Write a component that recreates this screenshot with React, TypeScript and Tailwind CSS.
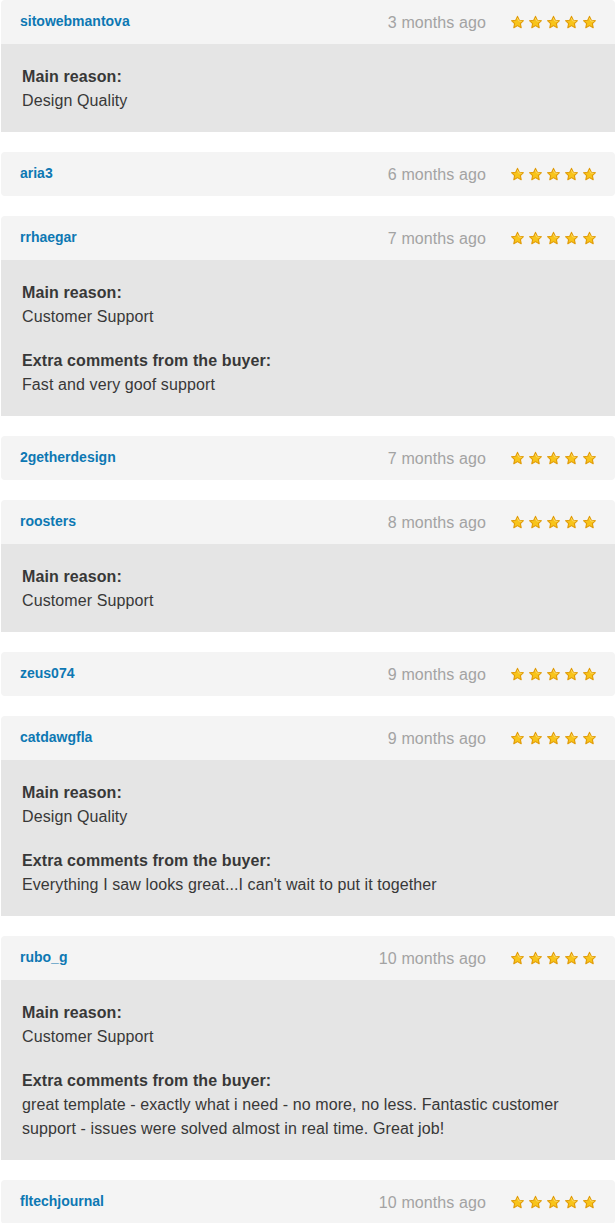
import React from "react";

interface Review {
  user: string;
  date: string;
  reason?: string;
  comment?: string;
}

const reviews: Review[] = [
  { user: "sitowebmantova", date: "3 months ago", reason: "Design Quality" },
  { user: "aria3", date: "6 months ago" },
  {
    user: "rrhaegar",
    date: "7 months ago",
    reason: "Customer Support",
    comment: "Fast and very goof support",
  },
  { user: "2getherdesign", date: "7 months ago" },
  { user: "roosters", date: "8 months ago", reason: "Customer Support" },
  { user: "zeus074", date: "9 months ago" },
  {
    user: "catdawgfla",
    date: "9 months ago",
    reason: "Design Quality",
    comment: "Everything I saw looks great...I can't wait to put it together",
  },
  {
    user: "rubo_g",
    date: "10 months ago",
    reason: "Customer Support",
    comment:
      "great template - exactly what i need - no more, no less. Fantastic customer support - issues were solved almost in real time. Great job!",
  },
  { user: "fltechjournal", date: "10 months ago" },
];

const Star = () => (
  <svg width="15" height="15" viewBox="0 0 24 24" className="block">
    <path
      d="M12 2.2l2.9 6.1 6.6.8-4.9 4.6 1.3 6.6L12 17l-5.9 3.3 1.3-6.6-4.9-4.6 6.6-.8z"
      fill="#f8c41a"
      stroke="#e19b08"
      strokeWidth="1.8"
      strokeLinejoin="round"
    />
    <path d="M12 5.5l1.9 4 4.3.5" fill="none" stroke="#fde27a" strokeWidth="1.2" strokeLinecap="round" />
  </svg>
);

const Stars = () => (
  <div className="flex items-center gap-[3px]">
    {Array.from({ length: 5 }).map((_, i) => (
      <Star key={i} />
    ))}
  </div>
);

const ReviewCard = ({ review }: { review: Review }) => {
  const hasBody = !!review.reason;
  return (
    <div className="w-full">
      <div
        className={`flex items-center justify-between h-[44px] pl-[19px] pr-[18px] bg-[#f4f4f4] ${
          hasBody ? "rounded-t-[4px]" : "rounded-[4px]"
        }`}
      >
        <a className="text-[14px] font-bold text-[#0d78b3] -mt-[2px]">{review.user}</a>
        <div className="flex items-center gap-[24px]">
          <span className="text-[16px] text-[#a3a3a3] translate-y-[1px] tracking-[0.1px]">{review.date}</span>
          <Stars />
        </div>
      </div>
      {hasBody && (
        <div className="bg-[#e5e5e5] pl-[21px] pr-5 pt-[21px] pb-[19px] text-[16px] leading-[24px] text-[#383838] tracking-[0.1px]">
          <p className="font-bold">Main reason:</p>
          <p>{review.reason}</p>
          {review.comment && (
            <>
              <p className="font-bold mt-5">Extra comments from the buyer:</p>
              <p>{review.comment}</p>
            </>
          )}
        </div>
      )}
    </div>
  );
};

export default function App() {
  return (
    <div
      className="w-[616px] bg-white px-[1px] flex flex-col gap-5"
      style={{ fontFamily: '"Liberation Sans", Arial, sans-serif' }}
    >
      {reviews.map((r, i) => (
        <ReviewCard key={i} review={r} />
      ))}
    </div>
  );
}
